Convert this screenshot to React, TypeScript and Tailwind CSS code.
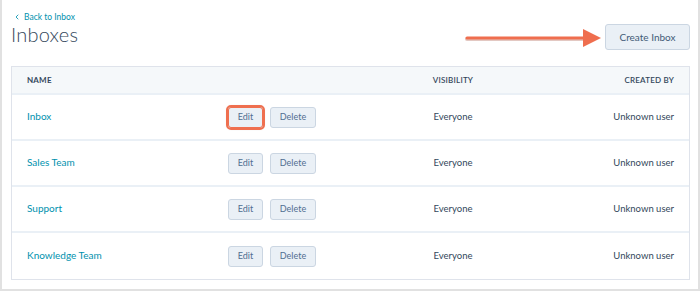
import { ChevronLeft } from 'lucide-react';

const rows = ['Inbox', 'Sales Team', 'Support', 'Knowledge Team'];

function Btn({ label, w, focused }: { label: string; w: string; focused?: boolean }) {
  return (
    <button
      className={`${w} h-[21px] rounded-[3px] border bg-[#eaf0f6] text-[9px] text-[#506e91] ${
        focused ? 'border-[#ef6f4f] outline-2 outline-[#ef6f4f] shadow-[0_0_3px_rgba(0,0,0,0.35)]' : 'border-[#cbd6e2]'
      }`}
    >
      {label}
    </button>
  );
}

export default function App() {
  return (
    <div
      className="relative w-[700px] h-[291px] bg-white border-l-2 border-r-2 border-b-2 border-[#e1e1e1] overflow-hidden text-[#33475b]"
      style={{ fontFamily: 'Lato, "Noto Sans", sans-serif' }}
    >
      <div className="pl-[9px] pr-[8px] pt-[11px]">
        <div className="flex items-end justify-between">
          <div>
            <div className="flex items-center gap-[3px] text-[8.5px] text-[#0091ae] leading-[12px] pl-[2px]">
              <ChevronLeft size={8} strokeWidth={2.5} />
              <span>Back to Inbox</span>
            </div>
            <h1 className="text-[20px] leading-[22px] font-light tracking-[0.2px] text-[#33475b]">Inboxes</h1>
          </div>
          <button className="w-[85px] h-[26px] mb-[-5px] rounded-[3px] border border-[#cbd6e2] bg-[#eaf0f6] text-[10px] text-[#425b76]">
            Create Inbox
          </button>
        </div>

        <div className="mt-[21px] border border-[#dfe3eb] bg-white">
          <div className="flex items-center h-[28px] pl-[15px] bg-[#f5f8fa] border-b-2 border-[#eaf0f6] text-[8px] font-bold tracking-[0.2px] text-[#33475b]">
            <div className="w-[201px]">NAME</div>
            <div className="w-[88px]" />
            <div className="w-[274px] text-center font-semibold">VISIBILITY</div>
            <div className="flex-1 text-right pr-[15px] font-semibold">CREATED BY</div>
          </div>
          {rows.map((name, i) => (
            <div
              key={name}
              className={`flex items-center h-[46px] pl-[15px] text-[9.5px] ${i < rows.length - 1 ? 'border-b-2 border-[#eaf0f6]' : ''}`}
            >
              <div className="w-[201px] text-[10px] text-[#0091ae] -mt-[2px]">{name}</div>
              <div className="w-[88px] flex gap-[7px]">
                <Btn label="Edit" w="w-[35px]" focused={i === 0} />
                <Btn label="Delete" w="w-[46px]" />
              </div>
              <div className="w-[274px] text-center">Everyone</div>
              <div className="flex-1 text-right pr-[15px]">Unknown user</div>
            </div>
          ))}
        </div>
      </div>

      <svg className="absolute left-[462px] top-[27px]" width="142" height="22" viewBox="0 0 142 22">
        <line x1="3" y1="11" x2="124" y2="11" stroke="#b06050" strokeOpacity="0.35" strokeWidth="4" strokeLinecap="round" transform="translate(0 1)" />
        <line x1="3" y1="11" x2="124" y2="11" stroke="#ef6e4e" strokeWidth="3" strokeLinecap="round" />
        <path d="M119 2 L137 11 L119 20 Z" fill="#ef6e4e" />
      </svg>
    </div>
  );
}
